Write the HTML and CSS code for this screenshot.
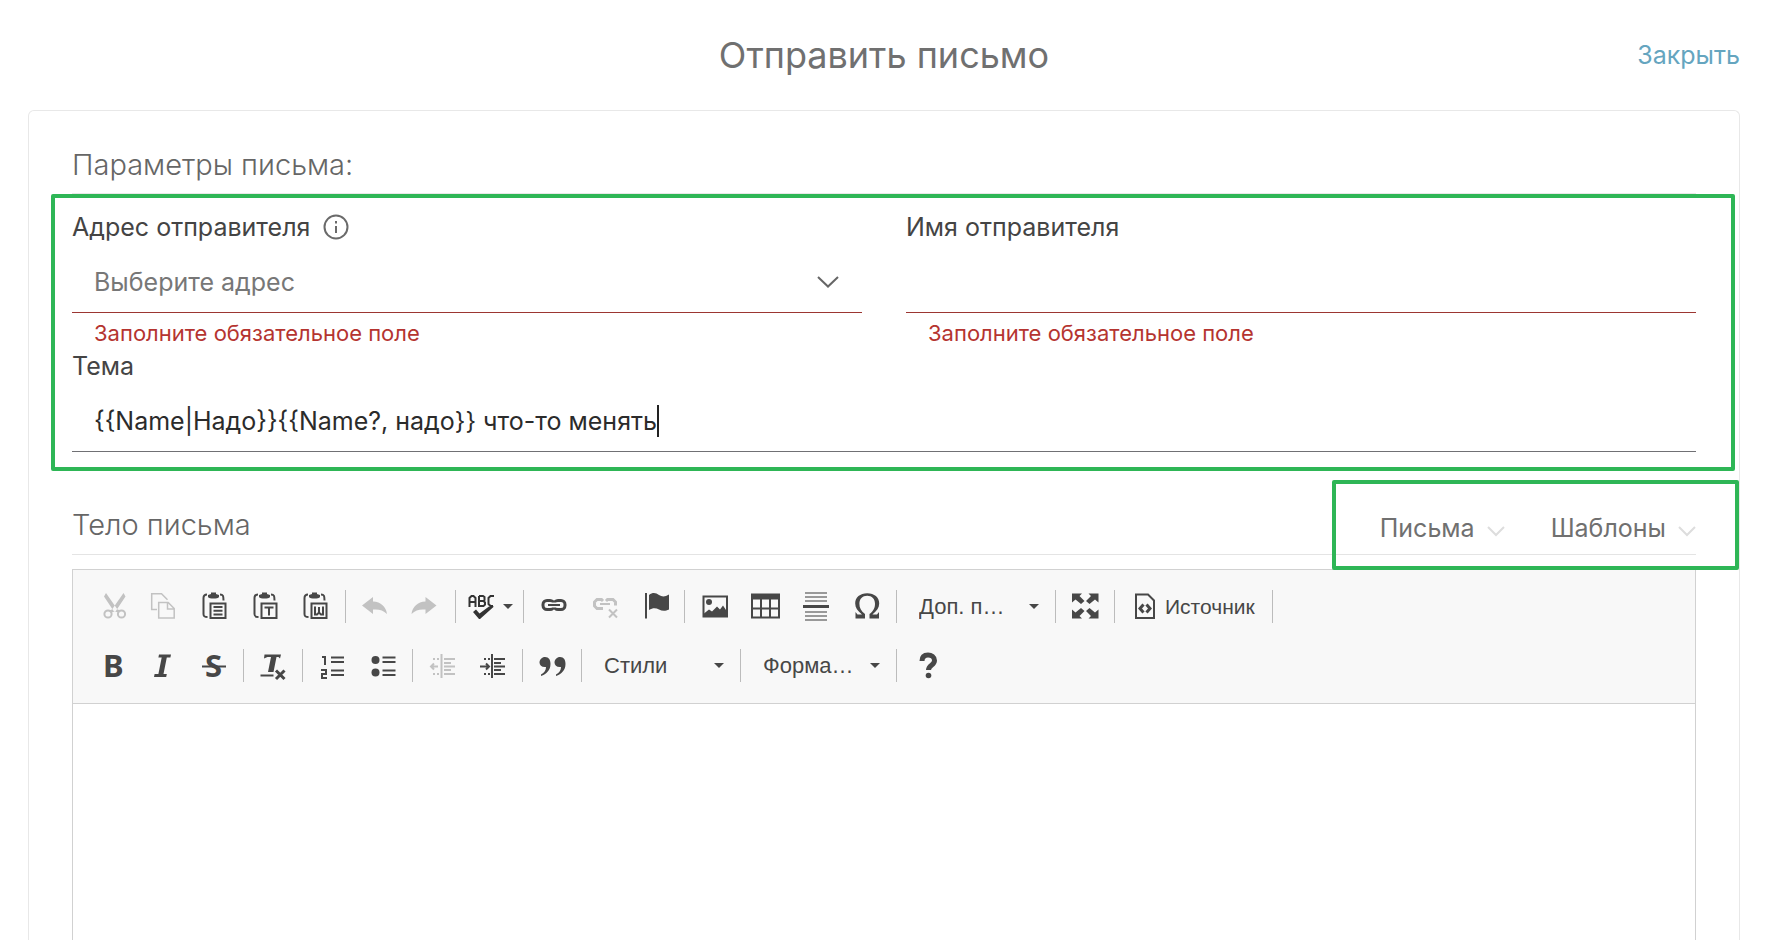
FILE: index.html
```html
<!DOCTYPE html>
<html lang="ru">
<head>
<meta charset="utf-8">
<title>Отправить письмо</title>
<link rel="stylesheet" href="styles.css">
</head>
<body>
<div class="page">
  <header class="page-header">
    <h1 class="page-title">Отправить письмо</h1>
    <a class="close-link" href="#">Закрыть</a>
  </header>

  <main class="card">
    <h2 class="section-title section-title-lined">Параметры письма:</h2>

    <form class="fields">
      <div class="field">
        <div class="label-row">
          <label for="from">Адрес отправителя</label>
          <svg class="info" viewBox="0 0 26 26" aria-hidden="true"><circle cx="13" cy="13" r="11.5"/><path d="M13 12v7M13 7v2.4"/></svg>
        </div>
        <div class="select-wrap">
          <select id="from" class="control control-error control-select"><option>Выберите адрес</option></select>
          <svg class="chevron" viewBox="0 0 22 12" aria-hidden="true"><path d="M1 1l10 9.500L21 1"/></svg>
        </div>
        <p class="error">Заполните обязательное поле</p>
      </div>
      <div class="field">
        <div class="label-row"><label for="sender">Имя отправителя</label></div>
        <input id="sender" class="control control-error" type="text">
        <p class="error">Заполните обязательное поле</p>
      </div>
      <div class="field field-wide">
        <div class="label-row"><label for="subject">Тема</label></div>
        <div class="select-wrap">
          <input id="subject" class="control" type="text" value="{{Name|Надо}}{{Name?, надо}} что-то менять">
          <span class="caret"></span>
        </div>
      </div>
    </form>

    <div class="body-header">
      <h2 class="section-title">Тело письма</h2>
      <div class="menus">
        <button class="menu" type="button" aria-haspopup="true">Письма<svg viewBox="0 0 18 10" aria-hidden="true"><path d="M1 1l8 8 8-8"/></svg></button>
        <button class="menu" type="button" aria-haspopup="true">Шаблоны<svg viewBox="0 0 18 10" aria-hidden="true"><path d="M1 1l8 8 8-8"/></svg></button>
      </div>
    </div>

    <section class="editor">
      <div class="toolbar">
        <div class="tool-row">
          <button class="tool off" type="button" aria-label="Вырезать"><svg viewBox="0 0 27 27"><path class="f" d="M7 0L18.500 16.500l3 1-1.500 2-5-1L5 3.500zM24.500 0L13 16.500l-3 1 1.500 2 5-1L26.500 3.500z"/><circle class="s2" cx="9" cy="21" r="3.600"/><circle class="s2" cx="22.500" cy="21" r="3.600"/></svg></button>
          <button class="tool off" type="button" aria-label="Копировать"><svg viewBox="0 0 27 27"><path class="s" d="M7 16.500H1.700V.7h9.800l6 6M8.700 9.500h9.500l6 6v9.500H8.700zM17.500 10v6h6.500"/></svg></button>
          <button class="tool" type="button" aria-label="Вставить"><svg viewBox="0 0 27 27"><path class="s2" d="M6 1.500C3 1.500 2.500 3 2.500 5v16c0 2 .5 3 4 3M19 1.500c3 0 3.500 1 3.500 6"/><path class="f" d="M7 4V2l3-1V-.5h5V1l3 1v2c-1 2-10 2-11 0z"/><path class="s2" d="M9.500 10.500h15V25h-15zM12.500 14h9M12.500 17.700h9M12.500 21.500h9"/></svg></button>
          <button class="tool" type="button" aria-label="Вставить текст"><svg viewBox="0 0 27 27"><path class="s2" d="M6 1.500C3 1.500 2.500 3 2.500 5v16c0 2 .5 3 4 3M19 1.500c3 0 3.500 1 3.500 6"/><path class="f" d="M7 4V2l3-1V-.5h5V1l3 1v2c-1 2-10 2-11 0z"/><path class="s2" d="M9.500 10.500h15V25h-15zM12.500 14.500h9M17 14.500v8"/></svg></button>
          <button class="tool" type="button" aria-label="Вставить из Word"><svg viewBox="0 0 27 27"><path class="s2" d="M5 1.500C2 1.500 1.500 3 1.500 5v16c0 2 .5 3 4 3M18 1.500c3 0 3.500 1 3.500 6"/><path class="f" d="M6 4V2l3-1V-.5h5V1l3 1v2c-1 2-10 2-11 0z"/><path class="s2" d="M8.500 10.500h15V25h-15zM12 13.500v8h2l2-2 2 2h2v-8M16 14v6"/></svg></button>
          <span class="sep"></span>
          <button class="tool off" type="button" aria-label="Отменить"><svg viewBox="0 0 27 27"><path class="f" d="M0 12.500L11 4v4.500c8 .5 13 5 14 12.500-4-4-8-5-14-4.500V21z"/></svg></button>
          <button class="tool off" type="button" aria-label="Повторить"><svg viewBox="0 0 27 27"><path class="f" d="M23.500 12.500L12.500 4v4.500c-8 .5-13 5-14 12.500 4-4 8-5 14-4.500V21z"/></svg></button>
          <span class="sep"></span>
          <button class="tool tool-menu" type="button" aria-label="Проверка орфографии"><svg viewBox="0 0 27 27"><path class="s2 dark" d="M1.500 14V5l2-2h2l2 2v9M1.500 9h6M11 3v10h4.500l1.500-1.500V9.500L15.500 8H11h4l1.500-1V4L15 3h-4M26 3h-3.500L20.500 5v6l2 2H25"/><path class="f dark" d="M5 19l3-2.500 3.500 4L21 13.500h5L12 26H11z"/></svg><i class="arrow"></i></button>
          <span class="sep"></span>
          <button class="tool" type="button" aria-label="Ссылка"><svg viewBox="0 0 27 27"><rect class="s3" x="3" y="7.500" width="11" height="9" rx="4"/><rect class="s3" x="14" y="7.500" width="11" height="9" rx="4"/><path class="light" d="M9 12h10"/><path class="s2" d="M8 12h12"/></svg></button>
          <button class="tool off" type="button" aria-label="Убрать ссылку"><svg viewBox="0 0 27 27"><path class="s3" d="M12 8l-1.500-1.500H6L3.500 9v4L6 15.500h6M15 8l1.500-1.500H22L24.500 9v3.500"/><path class="s2" d="M9 11h10M18 16.500l8 8M26 16.500l-8 8"/></svg></button>
          <button class="tool" type="button" aria-label="Якорь"><svg viewBox="0 0 27 27"><path class="s2" d="M4 0v25.500"/><path class="f" d="M7 2c4-3 7-2 10 0s6 2 10-.5v15c-4 2-7 1.500-10 0s-6-2-10 .5z"/></svg></button>
          <span class="sep"></span>
          <button class="tool" type="button" aria-label="Изображение"><svg viewBox="0 0 27 27"><path class="s2" d="M2.500 3.500h23.500v20H2.500z"/><circle class="f" cx="8" cy="9" r="3"/><path class="f" d="M3 23v-2.500l5-4 3 2 5-5 3 3 3-4 4 6v4.500z"/></svg></button>
          <button class="tool" type="button" aria-label="Таблица"><svg viewBox="0 0 27 27"><path class="f" d="M-1 .5h29v6H-1z"/><path class="s2" d="M0 1v23.500h27V1M0 15.500h27M9 5v19M18 5v19"/></svg></button>
          <button class="tool" type="button" aria-label="Разрыв страницы"><svg viewBox="0 0 27 27"><path class="thin" d="M2 0h22M2 4h22M2 8h22M2 19h22M2 23h22M2 27h22"/><path class="s3" d="M0 13.500h26"/></svg></button>
          <button class="tool" type="button" aria-label="Специальный символ"><svg viewBox="0 0 27 27"><path class="f" d="M1.500 19l2 2.500h4.500C3.500 18 1.200 14.500 1.200 10.500 1.200 4.500 6 .3 13.200.3s12 4.200 12 10.200c0 4-2.300 7.500-6.800 11H23l2-2.500v6.500h-9.500V21c4-3 5.500-6.200 5.500-10.300 0-5-3-8-7.800-8s-7.800 3-7.800 8C5.400 14.800 7 18 11 21v4.500H1.500z"/></svg></button>
          <span class="sep"></span>
          <div class="combo"><select aria-label="Доп. поля"><option>Доп. п…</option></select><i class="arrow"></i></div>
          <span class="sep"></span>
          <button class="tool" type="button" aria-label="Развернуть"><svg viewBox="0 0 27 27"><path class="f" d="M0 .5h10L7.500 3l5 5L9 11 3.500 6.500 0 9.500zM26.500 .5h-10L19 3l-5 5 3.500 3L23 6.500l3.500 3zM0 25.500h10L7.500 23l5-5L9 15l-5.500 4.500L0 16.500zM26.500 25.500h-10L19 23l-5-5 3.500-3 5.500 4.500 3.500-3z"/></svg></button>
          <span class="sep"></span>
          <button class="tool tool-source" type="button"><svg viewBox="0 0 20 27"><path class="s2" d="M1 1.500h12l6 6V25H1z"/><path class="s3" d="M8.500 11.500L5 15.500l3.500 4M11.500 11.500l3.500 4-3.500 4"/></svg>Источник</button>
          <span class="sep"></span>
        </div>
        <div class="tool-row">
          <button class="tool" type="button" aria-label="Полужирный"><svg viewBox="0 0 27 27"><text class="glyph" x="4" y="25">B</text></svg></button>
          <button class="tool" type="button" aria-label="Курсив"><svg viewBox="0 0 27 27"><path class="f" d="M9 2.500h12l-.6 3h-3.600L13.500 22h3.300l-.6 3H4l.6-3h3.800L11.700 5.500H8.400z"/></svg></button>
          <button class="tool" type="button" aria-label="Зачеркнутый"><svg viewBox="0 0 27 27"><text class="glyph" x="4" y="25">S</text><path class="s2" d="M1 14.500h24"/></svg></button>
          <span class="sep"></span>
          <button class="tool" type="button" aria-label="Убрать форматирование"><svg viewBox="0 0 27 27"><path class="f" d="M4.500 2.500H21l-1 4-1.500-1.500h-2L13.500 20H8l3-15H7.500L4 6.500zM.5 22.500h13v2H.5z"/><path class="s3" d="M16 18.500l8.500 8.500M24.500 18.500L16 27"/></svg></button>
          <span class="sep"></span>
          <button class="tool" type="button" aria-label="Нумерованный список"><svg viewBox="0 0 27 27"><path class="s2" d="M3 5h3v8M2 18h5v4H3v4h5M12 5.500h13M12 10h13M12 18.500h13M12 23h13"/></svg></button>
          <button class="tool" type="button" aria-label="Маркированный список"><svg viewBox="0 0 27 27"><circle class="f" cx="5.500" cy="8" r="4"/><circle class="f" cx="5.500" cy="20.500" r="4"/><path class="s2" d="M12.500 5.500h13M12.500 10h13M12.500 18.500h13M12.500 23h13"/></svg></button>
          <span class="sep"></span>
          <button class="tool off" type="button" aria-label="Уменьшить отступ"><svg viewBox="0 0 27 27"><path class="s2" d="M12.500 2v24M15 7h11M15 11h7M15 14.500h11M15 18h7M15 22h11M2 14.500h7M5 11.500l-3 3 3 3"/><path class="s2 dots" d="M4 7h7M4 22h7"/></svg></button>
          <button class="tool" type="button" aria-label="Увеличить отступ"><svg viewBox="0 0 27 27"><path class="s2" d="M12 2v24M14 7h11M14 11h7M14 14.500h11M14 18h7M14 22h11M0 14.500h9M6 11.500l3 3-3 3"/><path class="s2 dots" d="M4 7h7M4 22h7"/></svg></button>
          <span class="sep"></span>
          <button class="tool" type="button" aria-label="Цитата"><svg viewBox="0 0 27 27"><path class="f" d="M6 5c4 0 5.500 3 5.500 7 0 6-4 10-9.500 12v-1.500c3.500-2 5-4.500 5-7.500C3 15.500.5 13.500.5 10.500S3 5 6 5zM21 5c4 0 5.500 3 5.500 7 0 6-4 10-9.500 12v-1.500c3.500-2 5-4.500 5-7.500-4 .5-6.500-1.500-6.500-4.500S18 5 21 5z"/></svg></button>
          <span class="sep"></span>
          <div class="combo"><select aria-label="Стили"><option>Стили</option></select><i class="arrow"></i></div>
          <span class="sep"></span>
          <div class="combo combo-format"><select aria-label="Форматирование"><option>Форма…</option></select><i class="arrow"></i></div>
          <span class="sep"></span>
          <button class="tool" type="button" aria-label="Справка"><svg viewBox="0 0 27 27"><path class="help" d="M9 9c0-4.500 2.500-6 6-6s6.500 2 6.500 5.500c0 5-6 4.500-6 9.500"/><circle class="f" cx="15.500" cy="23.500" r="2.800"/></svg></button>
        </div>
      </div>
      <textarea class="editor-body" aria-label="Тело письма"></textarea>
    </section>
  </main>
</div>
</body>
</html>
```
FILE: styles.css
```css
* { box-sizing: border-box; }

body {
  margin: 0;
  background: #fff;
  color: #444;
  font-family: Inter, "Liberation Sans", sans-serif;
  font-size: 25px;
  line-height: 30px;
}

h1, h2, p { margin: 0; font-weight: 400; }

button, input, select, textarea {
  margin: 0;
  padding: 0;
  border: 0;
  border-radius: 0;
  background: none;
  color: inherit;
  font: inherit;
  outline: none;
  appearance: none;
}

svg { fill: none; stroke: none; overflow: visible; flex: none; }

.page {
  display: flex;
  flex-direction: column;
  min-height: 100vh;
  padding: 0 28px;
}

.page-header {
  display: grid;
  grid-template-columns: 1fr auto 1fr;
  align-items: center;
  height: 110px;
}

.page-title {
  grid-column: 2;
  color: #707070;
  font-size: 36px;
  line-height: 44px;
}

.close-link {
  justify-self: end;
  color: #65a5bf;
  text-decoration: none;
}

.card {
  display: flex;
  flex: 1;
  flex-direction: column;
  padding: 37px 43px 0;
  border: 1px solid #e8e8e8;
  border-bottom: 0;
  border-radius: 6px 6px 0 0;
}

.section-title {
  padding-bottom: 12px;
  color: #666;
  font-size: 29px;
  font-weight: 300;
  line-height: 34px;
}

.section-title-lined {
  padding-bottom: 11px;
  border-bottom: 1px solid #e8e8e8;
}

.fields {
  position: relative;
  display: grid;
  grid-template-columns: 1fr 1fr;
  gap: 4px 44px;
  padding: 18px 0 19px;
}

.fields::after,
.menus::after {
  content: "";
  position: absolute;
  border: 4px solid #2eb656;
  border-radius: 2px;
  pointer-events: none;
}

.fields::after { inset: 0 -39px 0 -21px; }
.menus::after { inset: -33px -43px -27px -48px; }

.field-wide { grid-column: 1 / -1; }

.label-row {
  display: flex;
  align-items: center;
  gap: 13px;
  margin-bottom: 10px;
}

.info {
  width: 26px;
  height: 26px;
  stroke: #6a6a6a;
  stroke-width: 2;
}

.select-wrap { position: relative; }

.control {
  display: block;
  width: 100%;
  height: 61px;
  padding: 0 22px;
  border-bottom: 1px solid #707074;
  color: #2b2b2b;
}

.control-select { color: #777; }
.control-error { border-bottom-color: #9c3632; }

.chevron {
  position: absolute;
  top: 24px;
  right: 23px;
  width: 22px;
  height: 12px;
  stroke: #666;
  stroke-width: 2;
  pointer-events: none;
}

.caret {
  position: absolute;
  top: 14px;
  left: 585px;
  width: 2px;
  height: 32px;
  background: #222;
}

.error {
  margin-top: 6px;
  padding-left: 22px;
  color: #b53430;
  font-size: 22px;
  line-height: 28px;
}

.body-header {
  display: flex;
  align-items: flex-end;
  justify-content: space-between;
  height: 84px;
  border-bottom: 1px solid #e4e4e4;
}

.menus {
  position: relative;
  display: flex;
  gap: 46px;
  margin-bottom: 11px;
}

.menu {
  display: flex;
  align-items: center;
  gap: 12px;
  color: #707070;
}

.menu svg {
  width: 18px;
  height: 10px;
  margin-top: 6px;
  stroke: #ddd;
  stroke-width: 2;
}

.editor {
  display: flex;
  flex: 1;
  flex-direction: column;
  margin-top: 14px;
  border: 1px solid #d1d1d1;
  border-bottom: 0;
}

.toolbar {
  padding: 7px 14px 8px;
  border-bottom: 1px solid #d1d1d1;
  background: #f8f8f8;
  color: #474747;
  font-family: "Liberation Sans", Arial, sans-serif;
  font-size: 21px;
}

.tool-row {
  display: flex;
  align-items: center;
  height: 59px;
}

.sep {
  width: 1px;
  height: 33px;
  margin: 0 4px 0 3px;
  background: #bcbcbc;
}

.tool {
  display: flex;
  align-items: center;
  justify-content: center;
  width: 51px;
  height: 51px;
}

.tool svg { width: 27px; height: 27px; }
.tool-menu { width: 60px; gap: 8px; }
.tool-source { width: auto; gap: 10px; padding: 0 14px 0 16px; }
.tool-source svg { width: 20px; }
.off { color: #c2c2c2; }

.f { fill: currentColor; }
.s, .s2, .s3, .thin, .light, .help { stroke: currentColor; }
.s { stroke-width: 1.5; }
.s2 { stroke-width: 2; }
.s3 { stroke-width: 3; }
.thin { stroke: #999; stroke-width: 2; }
.light { stroke: #f8f8f8; stroke-width: 5; }
.help { stroke-width: 5; }
.dots { stroke-dasharray: 2 2; }
.s2.dark { stroke: #333; }
.f.dark { fill: #333; }

.glyph {
  fill: currentColor;
  font: 700 31px "Noto Sans", sans-serif;
}

.arrow {
  width: 0;
  height: 0;
  border: 5px solid transparent;
  border-top-color: #474747;
  border-bottom: 0;
}

.combo {
  position: relative;
  width: 151px;
}

.combo-format { width: 148px; }

.combo select {
  width: 100%;
  height: 51px;
  padding: 0 32px 0 18px;
  font-size: 22px;
}

.combo .arrow {
  position: absolute;
  top: 23px;
  right: 13px;
  pointer-events: none;
}

.editor-body {
  flex: 1;
  width: 100%;
  min-height: 200px;
  padding: 20px;
  resize: none;
}
```
